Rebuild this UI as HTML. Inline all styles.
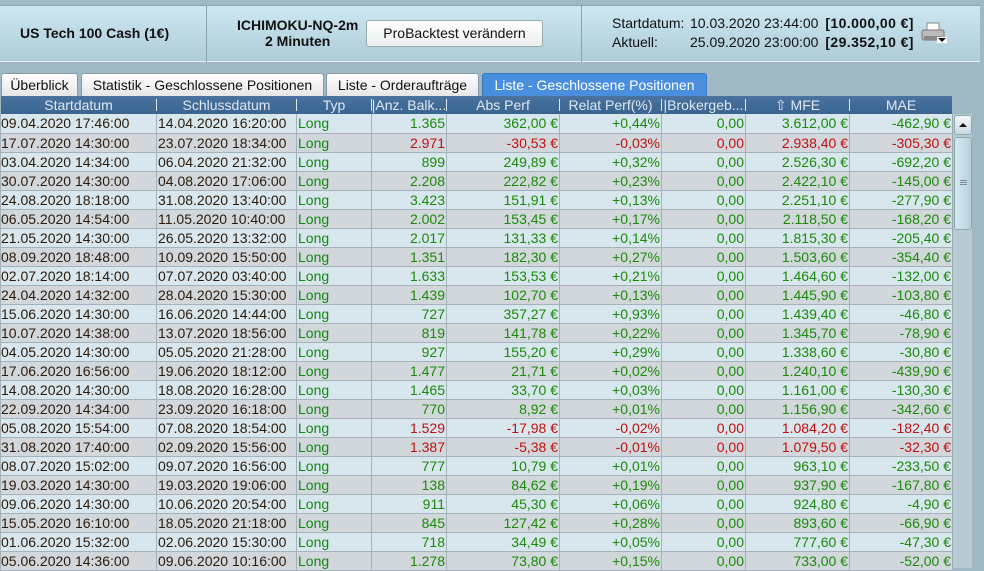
<!DOCTYPE html>
<html><head><meta charset="utf-8">
<style>
*{margin:0;padding:0;box-sizing:border-box}
body{width:984px;height:568px;overflow:hidden;background:#9fb8c4;font-family:"Liberation Sans",Arial,sans-serif;position:relative}
.panel{position:absolute;left:0;top:5px;width:980px;height:57px;background:linear-gradient(#cde8f3,#aecbd7);border-top:1px solid #8aa6b2;border-bottom:1px solid #e8f2f6}
.sep{position:absolute;top:0;width:1px;height:56px;background:#8aa0aa}
.b{font-weight:bold;font-size:14px;color:#111;position:absolute}
.btn{position:absolute;left:366px;top:14px;width:177px;height:27px;background:linear-gradient(#fff,#eceeef);border:1px solid #9aa;border-radius:3px;font-size:14px;text-align:center;line-height:25px;color:#111}
.info{position:absolute;left:612px;top:8px;font-size:14px;line-height:19px;color:#111}
.info b{letter-spacing:0.4px;margin-left:3px}
.tab{position:absolute;top:73px;height:23px;background:linear-gradient(#fff,#e6e6e6);border:1px solid #8a9aa4;border-bottom:none;border-radius:3px 3px 0 0;font-size:14px;line-height:22px;text-align:center;color:#111}
.tab.act{background:#4a8fde;color:#fff;border-color:#3a78c4}
table{position:absolute;left:0;top:96px;border-collapse:collapse;table-layout:fixed;width:952px;font-size:14px}
th{background:linear-gradient(#4a73a0,#3a6590);color:#dfe8f2;font-weight:normal;height:18px;text-align:center;font-size:14px;position:relative}
th span{position:absolute;right:0;top:3px;height:12px;width:1px;background:#dfe8f2}
td{height:19px;border:1px solid #a6b2ba;border-top:none;padding:0 1px;white-space:nowrap;overflow:hidden;line-height:18px}
tr:nth-child(even) td{background:#d8e6ed}
tr:nth-child(odd) td{background:#d2d7db}
td:nth-child(1),td:nth-child(2){color:#2a1a0a;text-align:left}
td:nth-child(1){padding-left:0}
td:nth-child(3){color:#118a11;text-align:left}
td:nth-child(n+4){text-align:right}
tr.g td:nth-child(n+4){color:#1a8a0a}
tr.r td:nth-child(n+4){color:#c01010}
.sb{position:absolute;left:952px;top:114px;width:20px;height:454px;background:#b8cbd4;border-left:1px solid #98aab4}
.sbu{position:absolute;left:1px;top:1px;width:18px;height:20px;background:linear-gradient(#f4f8fa,#c8d8e0);border:1px solid #8aa;border-radius:3px}
.sbt{position:absolute;left:1px;top:23px;width:18px;height:93px;background:linear-gradient(90deg,#d8e8ef,#b8d0dc);border:1px solid #8aa;border-radius:3px}
</style></head><body>
<div class="panel">
 <div class="b" style="left:20px;top:19px">US Tech 100 Cash (1€)</div>
 <div class="sep" style="left:206px"></div>
 <div class="b" style="left:237px;top:11px;text-align:center;line-height:16px">ICHIMOKU-NQ-2m<br>2 Minuten</div>
 <div class="btn">ProBacktest verändern</div>
 <div class="sep" style="left:581px"></div>
 <div class="info"><span style="display:inline-block;width:78px">Startdatum:</span>10.03.2020 23:44:00 <b>[10.000,00 €]</b><br><span style="display:inline-block;width:78px">Aktuell:</span>25.09.2020 23:00:00 <b>[29.352,10 €]</b></div>
 <svg style="position:absolute;left:921px;top:16px" width="26" height="24" viewBox="0 0 26 24"><rect x="6" y="1" width="12" height="8" fill="#fff" stroke="#888"/><rect x="1" y="8" width="22" height="10" rx="2" fill="#bbb" stroke="#777"/><rect x="3" y="14" width="18" height="4" fill="#888"/><rect x="16" y="15" width="10" height="6" fill="#fff"/><path d="M17 16h8l-4 4z" fill="#111"/></svg>
</div>
<div class="tab" style="left:1px;width:77px">Überblick</div>
<div class="tab" style="left:81px;width:243px">Statistik - Geschlossene Positionen</div>
<div class="tab" style="left:326px;width:153px">Liste - Orderaufträge</div>
<div class="tab act" style="left:482px;width:225px">Liste - Geschlossene Positionen</div>
<table>
<colgroup><col style="width:156px"><col style="width:140px"><col style="width:75px"><col style="width:75px"><col style="width:113px"><col style="width:102px"><col style="width:84px"><col style="width:104px"><col style="width:103px"></colgroup>
<tr><th>Startdatum<span></span></th><th>Schlussdatum<span></span></th><th>Typ<span style="right:0"></span></th><th>|Anz. Balk...<span></span></th><th>Abs Perf<span></span></th><th>Relat Perf(%)<span></span></th><th>|Brokergeb...<span></span></th><th>⇧ MFE<span></span></th><th>MAE</th></tr>
<tr class="g"><td>09.04.2020 17:46:00</td><td>14.04.2020 16:20:00</td><td>Long</td><td>1.365</td><td>362,00 €</td><td>+0,44%</td><td>0,00</td><td>3.612,00 €</td><td>-462,90 €</td></tr>
<tr class="r"><td>17.07.2020 14:30:00</td><td>23.07.2020 18:34:00</td><td>Long</td><td>2.971</td><td>-30,53 €</td><td>-0,03%</td><td>0,00</td><td>2.938,40 €</td><td>-305,30 €</td></tr>
<tr class="g"><td>03.04.2020 14:34:00</td><td>06.04.2020 21:32:00</td><td>Long</td><td>899</td><td>249,89 €</td><td>+0,32%</td><td>0,00</td><td>2.526,30 €</td><td>-692,20 €</td></tr>
<tr class="g"><td>30.07.2020 14:30:00</td><td>04.08.2020 17:06:00</td><td>Long</td><td>2.208</td><td>222,82 €</td><td>+0,23%</td><td>0,00</td><td>2.422,10 €</td><td>-145,00 €</td></tr>
<tr class="g"><td>24.08.2020 18:18:00</td><td>31.08.2020 13:40:00</td><td>Long</td><td>3.423</td><td>151,91 €</td><td>+0,13%</td><td>0,00</td><td>2.251,10 €</td><td>-277,90 €</td></tr>
<tr class="g"><td>06.05.2020 14:54:00</td><td>11.05.2020 10:40:00</td><td>Long</td><td>2.002</td><td>153,45 €</td><td>+0,17%</td><td>0,00</td><td>2.118,50 €</td><td>-168,20 €</td></tr>
<tr class="g"><td>21.05.2020 14:30:00</td><td>26.05.2020 13:32:00</td><td>Long</td><td>2.017</td><td>131,33 €</td><td>+0,14%</td><td>0,00</td><td>1.815,30 €</td><td>-205,40 €</td></tr>
<tr class="g"><td>08.09.2020 18:48:00</td><td>10.09.2020 15:50:00</td><td>Long</td><td>1.351</td><td>182,30 €</td><td>+0,27%</td><td>0,00</td><td>1.503,60 €</td><td>-354,40 €</td></tr>
<tr class="g"><td>02.07.2020 18:14:00</td><td>07.07.2020 03:40:00</td><td>Long</td><td>1.633</td><td>153,53 €</td><td>+0,21%</td><td>0,00</td><td>1.464,60 €</td><td>-132,00 €</td></tr>
<tr class="g"><td>24.04.2020 14:32:00</td><td>28.04.2020 15:30:00</td><td>Long</td><td>1.439</td><td>102,70 €</td><td>+0,13%</td><td>0,00</td><td>1.445,90 €</td><td>-103,80 €</td></tr>
<tr class="g"><td>15.06.2020 14:30:00</td><td>16.06.2020 14:44:00</td><td>Long</td><td>727</td><td>357,27 €</td><td>+0,93%</td><td>0,00</td><td>1.439,40 €</td><td>-46,80 €</td></tr>
<tr class="g"><td>10.07.2020 14:38:00</td><td>13.07.2020 18:56:00</td><td>Long</td><td>819</td><td>141,78 €</td><td>+0,22%</td><td>0,00</td><td>1.345,70 €</td><td>-78,90 €</td></tr>
<tr class="g"><td>04.05.2020 14:30:00</td><td>05.05.2020 21:28:00</td><td>Long</td><td>927</td><td>155,20 €</td><td>+0,29%</td><td>0,00</td><td>1.338,60 €</td><td>-30,80 €</td></tr>
<tr class="g"><td>17.06.2020 16:56:00</td><td>19.06.2020 18:12:00</td><td>Long</td><td>1.477</td><td>21,71 €</td><td>+0,02%</td><td>0,00</td><td>1.240,10 €</td><td>-439,90 €</td></tr>
<tr class="g"><td>14.08.2020 14:30:00</td><td>18.08.2020 16:28:00</td><td>Long</td><td>1.465</td><td>33,70 €</td><td>+0,03%</td><td>0,00</td><td>1.161,00 €</td><td>-130,30 €</td></tr>
<tr class="g"><td>22.09.2020 14:34:00</td><td>23.09.2020 16:18:00</td><td>Long</td><td>770</td><td>8,92 €</td><td>+0,01%</td><td>0,00</td><td>1.156,90 €</td><td>-342,60 €</td></tr>
<tr class="r"><td>05.08.2020 15:54:00</td><td>07.08.2020 18:54:00</td><td>Long</td><td>1.529</td><td>-17,98 €</td><td>-0,02%</td><td>0,00</td><td>1.084,20 €</td><td>-182,40 €</td></tr>
<tr class="r"><td>31.08.2020 17:40:00</td><td>02.09.2020 15:56:00</td><td>Long</td><td>1.387</td><td>-5,38 €</td><td>-0,01%</td><td>0,00</td><td>1.079,50 €</td><td>-32,30 €</td></tr>
<tr class="g"><td>08.07.2020 15:02:00</td><td>09.07.2020 16:56:00</td><td>Long</td><td>777</td><td>10,79 €</td><td>+0,01%</td><td>0,00</td><td>963,10 €</td><td>-233,50 €</td></tr>
<tr class="g"><td>19.03.2020 14:30:00</td><td>19.03.2020 19:06:00</td><td>Long</td><td>138</td><td>84,62 €</td><td>+0,19%</td><td>0,00</td><td>937,90 €</td><td>-167,80 €</td></tr>
<tr class="g"><td>09.06.2020 14:30:00</td><td>10.06.2020 20:54:00</td><td>Long</td><td>911</td><td>45,30 €</td><td>+0,06%</td><td>0,00</td><td>924,80 €</td><td>-4,90 €</td></tr>
<tr class="g"><td>15.05.2020 16:10:00</td><td>18.05.2020 21:18:00</td><td>Long</td><td>845</td><td>127,42 €</td><td>+0,28%</td><td>0,00</td><td>893,60 €</td><td>-66,90 €</td></tr>
<tr class="g"><td>01.06.2020 15:32:00</td><td>02.06.2020 15:30:00</td><td>Long</td><td>718</td><td>34,49 €</td><td>+0,05%</td><td>0,00</td><td>777,60 €</td><td>-47,30 €</td></tr>
<tr class="g"><td>05.06.2020 14:36:00</td><td>09.06.2020 10:16:00</td><td>Long</td><td>1.278</td><td>73,80 €</td><td>+0,15%</td><td>0,00</td><td>733,00 €</td><td>-52,00 €</td></tr>
</table>
<div style="position:absolute;left:952px;top:96px;width:20px;height:18px;background:#9fb8c4"></div>
<div class="sb"><div class="sbu"><svg width="16" height="18"><path d="M4 11h8l-4-4z" fill="#111"/></svg></div><div class="sbt"><div style="position:absolute;left:5px;top:42px;width:7px;height:5px;border-top:1px solid #789;border-bottom:1px solid #789"></div><div style="position:absolute;left:5px;top:44px;width:7px;height:1px;background:#789"></div></div></div>
</body></html>
